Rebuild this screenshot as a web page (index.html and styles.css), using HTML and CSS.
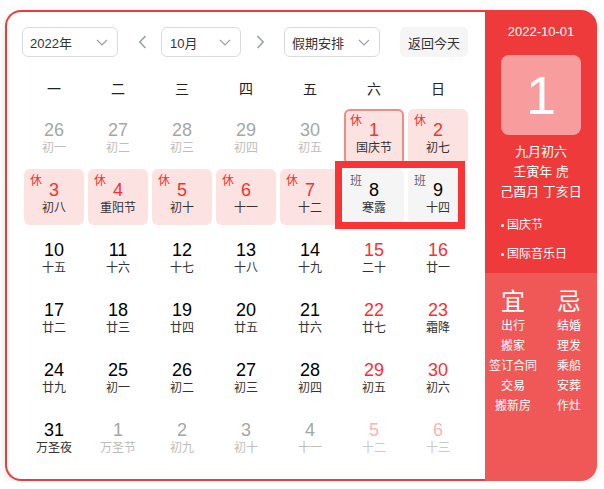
FILE: index.html
```html
<!DOCTYPE html>
<html lang="zh-CN">
<head>
<meta charset="utf-8">
<title>万年历</title>
<link rel="stylesheet" href="styles.css">
</head>
<body>
<div class="cal">
  <div class="main">
    <div class="toolbar">
      <div class="select sel-year"><span>2022年</span><svg class="chev" width="12" height="7" viewBox="0 0 12 7"><path d="M1 1l5 5 5-5" fill="none" stroke="#9aa0ad" stroke-width="1.2"/></svg></div>
      <button class="arrow arrow-prev"><svg width="9" height="14" viewBox="0 0 9 14"><path d="M7.5 1L1.8 7l5.7 6" fill="none" stroke="#9aa0ad" stroke-width="1.6"/></svg></button>
      <div class="select sel-month"><span>10月</span><svg class="chev" width="12" height="7" viewBox="0 0 12 7"><path d="M1 1l5 5 5-5" fill="none" stroke="#9aa0ad" stroke-width="1.2"/></svg></div>
      <button class="arrow arrow-next"><svg width="9" height="14" viewBox="0 0 9 14"><path d="M1.5 1l5.7 6-5.7 6" fill="none" stroke="#9aa0ad" stroke-width="1.6"/></svg></button>
      <div class="select sel-hol"><span>假期安排</span><svg class="chev" width="12" height="7" viewBox="0 0 12 7"><path d="M1 1l5 5 5-5" fill="none" stroke="#9aa0ad" stroke-width="1.2"/></svg></div>
      <button class="today">返回今天</button>
    </div>
    <div class="weekdays">
      <span>一</span><span>二</span><span>三</span><span>四</span><span>五</span><span>六</span><span>日</span>
    </div>
    <div class="grid">
      <div class="cell other"><div class="num">26</div><div class="lunar">初一</div></div>
      <div class="cell other"><div class="num">27</div><div class="lunar">初二</div></div>
      <div class="cell other"><div class="num">28</div><div class="lunar">初三</div></div>
      <div class="cell other"><div class="num">29</div><div class="lunar">初四</div></div>
      <div class="cell other"><div class="num">30</div><div class="lunar">初五</div></div>
      <div class="cell rest selected"><span class="tag">休</span><div class="num">1</div><div class="lunar">国庆节</div></div>
      <div class="cell rest"><span class="tag">休</span><div class="num">2</div><div class="lunar">初七</div></div>

      <div class="cell rest"><span class="tag">休</span><div class="num">3</div><div class="lunar">初八</div></div>
      <div class="cell rest"><span class="tag">休</span><div class="num">4</div><div class="lunar">重阳节</div></div>
      <div class="cell rest"><span class="tag">休</span><div class="num">5</div><div class="lunar">初十</div></div>
      <div class="cell rest"><span class="tag">休</span><div class="num">6</div><div class="lunar">十一</div></div>
      <div class="cell rest"><span class="tag">休</span><div class="num">7</div><div class="lunar">十二</div></div>
      <div class="cell work"><span class="tag">班</span><div class="num">8</div><div class="lunar">寒露</div></div>
      <div class="cell work"><span class="tag">班</span><div class="num">9</div><div class="lunar">十四</div></div>

      <div class="cell"><div class="num">10</div><div class="lunar">十五</div></div>
      <div class="cell"><div class="num">11</div><div class="lunar">十六</div></div>
      <div class="cell"><div class="num">12</div><div class="lunar">十七</div></div>
      <div class="cell"><div class="num">13</div><div class="lunar">十八</div></div>
      <div class="cell"><div class="num">14</div><div class="lunar">十九</div></div>
      <div class="cell weekend"><div class="num">15</div><div class="lunar">二十</div></div>
      <div class="cell weekend"><div class="num">16</div><div class="lunar">廿一</div></div>

      <div class="cell"><div class="num">17</div><div class="lunar">廿二</div></div>
      <div class="cell"><div class="num">18</div><div class="lunar">廿三</div></div>
      <div class="cell"><div class="num">19</div><div class="lunar">廿四</div></div>
      <div class="cell"><div class="num">20</div><div class="lunar">廿五</div></div>
      <div class="cell"><div class="num">21</div><div class="lunar">廿六</div></div>
      <div class="cell weekend"><div class="num">22</div><div class="lunar">廿七</div></div>
      <div class="cell weekend"><div class="num">23</div><div class="lunar">霜降</div></div>

      <div class="cell"><div class="num">24</div><div class="lunar">廿九</div></div>
      <div class="cell"><div class="num">25</div><div class="lunar">初一</div></div>
      <div class="cell"><div class="num">26</div><div class="lunar">初二</div></div>
      <div class="cell"><div class="num">27</div><div class="lunar">初三</div></div>
      <div class="cell"><div class="num">28</div><div class="lunar">初四</div></div>
      <div class="cell weekend"><div class="num">29</div><div class="lunar">初五</div></div>
      <div class="cell weekend"><div class="num">30</div><div class="lunar">初六</div></div>

      <div class="cell"><div class="num">31</div><div class="lunar">万圣夜</div></div>
      <div class="cell other"><div class="num">1</div><div class="lunar">万圣节</div></div>
      <div class="cell other"><div class="num">2</div><div class="lunar">初九</div></div>
      <div class="cell other"><div class="num">3</div><div class="lunar">初十</div></div>
      <div class="cell other"><div class="num">4</div><div class="lunar">十一</div></div>
      <div class="cell other other-weekend"><div class="num">5</div><div class="lunar">十二</div></div>
      <div class="cell other other-weekend"><div class="num">6</div><div class="lunar">十三</div></div>

      <div class="mark"></div>
    </div>
  </div>
  <div class="side">
    <div class="side-top">
      <div class="side-date">2022-10-01</div>
      <div class="bigday">1</div>
      <div class="side-lunar">九月初六</div>
      <div class="side-lunar">壬寅年 虎</div>
      <div class="side-lunar">己酉月 丁亥日</div>
      <ul class="fests">
        <li>国庆节</li>
        <li>国际音乐日</li>
      </ul>
    </div>
    <div class="side-bottom">
      <div class="col">
        <div class="col-head">宜</div>
        <div class="col-item">出行</div>
        <div class="col-item">搬家</div>
        <div class="col-item">签订合同</div>
        <div class="col-item">交易</div>
        <div class="col-item">搬新房</div>
      </div>
      <div class="col">
        <div class="col-head">忌</div>
        <div class="col-item">结婚</div>
        <div class="col-item">理发</div>
        <div class="col-item">乘船</div>
        <div class="col-item">安葬</div>
        <div class="col-item">作灶</div>
      </div>
    </div>
  </div>
</div>
</body>
</html>
```

FILE: styles.css
```css
* { box-sizing: border-box; }

body {
  margin: 0;
  background: #fff;
  font-family: "Liberation Sans", "Noto Sans CJK SC", sans-serif;
  color: #333;
}

.cal {
  margin: 10px 0 0 5px;
  width: 592px;
  height: 471px;
  display: flex;
  border-radius: 16px;
  box-shadow: 0 2px 8px rgba(0, 0, 0, 0.12);
}

.main {
  width: 480px;
  border: 2px solid #ee3a3a;
  border-right: none;
  border-radius: 16px 0 0 16px;
  padding-top: 15px;
  background: #fff;
}

.toolbar {
  display: flex;
  align-items: center;
  height: 30px;
  margin-left: 15px;
}

.select {
  height: 30px;
  border: 1px solid #d9dbe1;
  border-radius: 6px;
  display: flex;
  align-items: center;
  justify-content: space-between;
  padding: 0 9px 0 7px;
  font-size: 13px;
  color: #333;
}

.sel-year { width: 96px; }
.sel-month { width: 80px; margin-left: 7px; padding-left: 8px; }
.sel-hol { width: 96px; margin-left: 12px; }

.arrow {
  width: 24px;
  height: 30px;
  border: none;
  background: none;
  padding: 0;
  display: flex;
  align-items: center;
  justify-content: center;
  margin-left: 12px;
}
.arrow-next { margin-left: 7px; }

.today {
  margin-left: 20px;
  width: 68px;
  height: 30px;
  border: none;
  border-radius: 6px;
  background: #f5f5f6;
  font-family: inherit;
  font-size: 13px;
  color: #333;
  padding: 0;
}

.weekdays {
  margin: 20px 0 0 17px;
  display: grid;
  grid-template-columns: repeat(7, 60px);
  column-gap: 4px;
  height: 24px;
  line-height: 24px;
  font-size: 14px;
  color: #222;
  text-align: center;
}

.grid {
  position: relative;
  margin: 8px 0 0 17px;
  display: grid;
  grid-template-columns: repeat(7, 60px);
  grid-auto-rows: 56px;
  gap: 4px;
}

.cell {
  position: relative;
  border-radius: 6px;
  text-align: center;
  padding-top: 11px;
}

.num {
  font-size: 18px;
  line-height: 20px;
  color: #000;
}

.lunar {
  font-size: 12px;
  line-height: 16px;
  color: #333;
}

.tag {
  position: absolute;
  top: 5px;
  left: 6px;
  font-size: 12px;
  line-height: 14px;
}

.rest { background: #fde2e2; }
.rest .num { color: #f73131; }
.rest .tag { color: #f73131; }

.selected { box-shadow: inset 0 0 0 2px #f28a8a; }

.work { background: #f5f5f6; }
.work .tag { color: #626675; }

.weekend .num { color: #f73131; }

.other .num { color: #a6a6a6; }
.other .lunar { color: #bdbdbd; }
.other-weekend .num { color: #fbb4b4; }
.other-weekend .lunar { color: #c8c8c8; }

.mark {
  position: absolute;
  left: 311px;
  top: 52px;
  width: 130px;
  height: 68px;
  border: 7px solid #fa3434;
}

.side {
  width: 112px;
  display: flex;
  flex-direction: column;
  border-radius: 0 16px 16px 0;
  overflow: hidden;
  color: #fff;
}

.side-top {
  flex: 1;
  background: #ee3a3a;
  padding-top: 12px;
  text-align: center;
}

.side-date {
  font-size: 13px;
  line-height: 20px;
}

.bigday {
  width: 80px;
  height: 80px;
  margin: 13px auto 7px;
  border-radius: 8px;
  background: rgba(255, 255, 255, 0.5);
  font-size: 54px;
  line-height: 80px;
}

.side-lunar {
  font-size: 13px;
  line-height: 20px;
}

.fests {
  list-style: none;
  margin: 13px 0 0;
  padding: 0 0 0 16px;
  text-align: left;
  display: flex;
  flex-direction: column;
  gap: 9px;
}

.fests li {
  font-size: 12px;
  line-height: 20px;
  display: flex;
  align-items: center;
}

.fests li::before {
  content: "";
  width: 3px;
  height: 3px;
  border-radius: 50%;
  background: #fff;
  margin-right: 3px;
}

.side-bottom {
  height: 208px;
  background: #f05858;
  padding-top: 15px;
  display: grid;
  grid-template-columns: 56px 56px;
  align-content: start;
  text-align: center;
}

.col-head {
  font-size: 24px;
  line-height: 28px;
}

.col-item {
  font-size: 12px;
  line-height: 20px;
  white-space: nowrap;
}
```
